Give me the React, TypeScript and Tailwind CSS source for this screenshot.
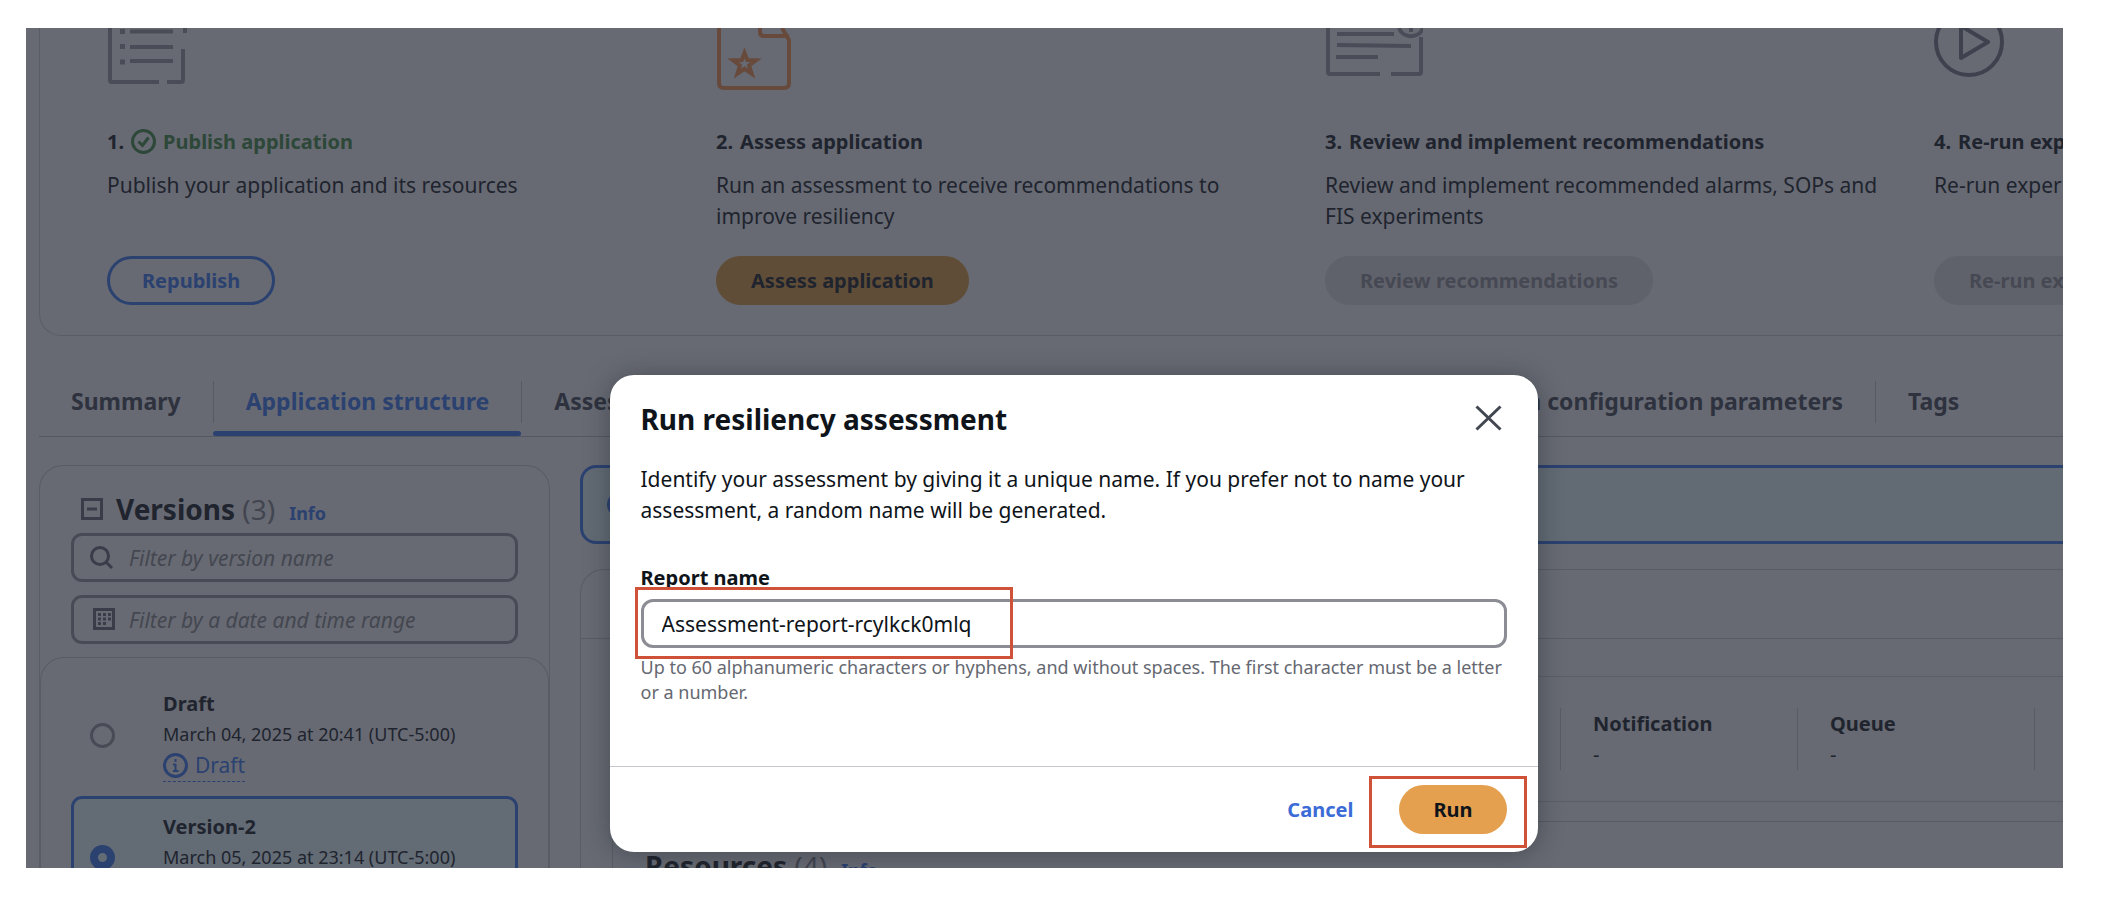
import { useState } from 'react'
import type { ReactNode } from 'react'

const steps = [
  {
    title: 'Publish application',
    done: true,
    text: 'Publish your application and its resources',
    action: 'Republish',
    look: 'border-[3px] border-[#2b4170] text-[#2b4170]',
    icon: <ListIcon />,
  },
  {
    title: 'Assess application',
    text: 'Run an assessment to receive recommendations to improve resiliency',
    action: 'Assess application',
    look: 'border-[3px] border-[#604d37] bg-[#604d37] text-[#20242e]',
    icon: <ReportIcon />,
  },
  {
    title: 'Review and implement recommendations',
    text: 'Review and implement recommended alarms, SOPs and FIS experiments',
    action: 'Review recommendations',
    disabled: true,
    look: 'border-[3px] border-[#60626b] bg-[#60626b] text-[#464953]',
    icon: <AlarmIcon />,
  },
  {
    title: 'Re-run experiments',
    text: 'Re-run experiments to validate your resiliency posture',
    action: 'Re-run experiments',
    disabled: true,
    look: 'border-[3px] border-[#60626b] bg-[#60626b] text-[#464953]',
    icon: <PlayIcon />,
  },
]

const versions = [
  { name: 'Draft', date: 'March 04, 2025 at 20:41 (UTC-5:00)', draft: true },
  { name: 'Version-2', date: 'March 05, 2025 at 23:14 (UTC-5:00)', draft: false },
]

const counts = ['Compute', 'Database', 'Storage', 'Network', 'Notification', 'Queue', 'Other']

function ListIcon() {
  return (
    <svg width="80" height="62" viewBox="0 0 80 62" fill="none" stroke="#4a4d57" strokeWidth="4">
      <path d="M3 0v52q0 2 2 2h47M60 54h14q2 0 2-2V21M78 0v5" />
      <path d="M23 3.500h43M23 19h43M23 33h43" />
      <path d="M13 3.500h5M13 18.500h5M13 34h5" strokeWidth="5" />
    </svg>
  )
}

function ReportIcon() {
  return (
    <svg width="80" height="62" viewBox="0 0 80 62" fill="none" stroke="#674a3c" strokeWidth="4">
      <path d="M3 0v55q0 5 5 5h60q5 0 5-5V12L66 0M44 0v4q0 4 4 4h25" />
      <path d="M28.500 25l2.800 7.100 8.600.2-6.800 5.200 2.500 8.200-7.100-4.900-7.100 4.900 2.500-8.200-6.800-5.200 8.600-.2z" />
    </svg>
  )
}

function AlarmIcon() {
  return (
    <svg width="98" height="62" viewBox="0 0 98 62" fill="none" stroke="#4a4d57" strokeWidth="4">
      <path d="M3 0v44q0 2 2 2h50M66 46h28q2 0 2-2V9" />
      <path d="M12 6h57M12 17l74 1M11 29h42" />
      <path d="M74 0c4 11 20 11 24 0M86 0v4" />
    </svg>
  )
}

function PlayIcon() {
  return (
    <svg width="80" height="62" viewBox="0 0 80 62" fill="none" stroke="#3f424e" strokeWidth="4">
      <circle cx="35" cy="14" r="33" />
      <path d="M27 -2v32l27-16z" strokeLinejoin="round" />
    </svg>
  )
}

function CheckIcon() {
  return (
    <svg width="25" height="25" viewBox="0 0 25 25" fill="none" stroke="#2d4738" strokeWidth="3">
      <circle cx="12.500" cy="12.500" r="11" />
      <path d="M7.500 12.500l4 4 6-8" />
    </svg>
  )
}

function InfoIcon() {
  return (
    <svg width="25" height="25" viewBox="0 0 25 25" fill="none" stroke="#2b4170" strokeWidth="3">
      <circle cx="12.500" cy="12.500" r="11" />
      <path d="M12.500 11v7M12.500 6v3M10 11.500h2.500M10 18h5.500" strokeWidth="2" />
    </svg>
  )
}

function Tab({ active, first, children }: { active?: boolean; first?: boolean; children: ReactNode }) {
  return (
    <div className="relative flex h-[66px] items-center pb-[3px]">
      {!first && <span className="h-[42px] w-px bg-[#575a64]" />}
      <a href="#tab" className={`px-8 text-[23px] font-bold whitespace-nowrap ${active ? 'text-[#2b4170]' : 'text-[#2e323e]'}`}>
        {children}
      </a>
      {active && <span className="absolute inset-x-0 bottom-0 h-[5px] rounded-[3px] bg-[#2b4170]" />}
    </div>
  )
}

function Steps() {
  return (
    <section className="ml-[13px] flex w-max rounded-b-[22px] border border-t-0 border-[#5a5d67] pb-[30px] pl-[67px]">
      {steps.map((s, i) => (
        <div key={s.title} className="w-[609px] shrink-0 pr-[50px]">
          {s.icon}
          <h3 className="mt-9 flex items-center gap-[7px] font-bold whitespace-nowrap">
            {i + 1}.
            {s.done ? (
              <span className="flex items-center gap-[7px] text-[#2d4738]">
                <CheckIcon />
                {s.title}
              </span>
            ) : (
              <span>{s.title}</span>
            )}
          </h3>
          <p className="mt-[13px] min-h-[62px] text-[21px]">{s.text}</p>
          <button disabled={s.disabled} className={`mt-6 h-[49px] rounded-full px-8 font-bold ${s.look}`}>
            {s.action}
          </button>
        </div>
      ))}
    </section>
  )
}

function Versions() {
  const [selected, setSelected] = useState('Version-2')
  const box =
    'h-[49px] w-full rounded-[11px] border-[3px] border-[#484b55] bg-transparent pr-4 pl-[55px] text-[21px] text-[#20242e] placeholder:text-[#444750] placeholder:italic'

  return (
    <section className="w-[511px] shrink-0 rounded-t-[24px] border border-b-0 border-[#595c66]">
      <div className="px-[31px] pt-[25px]">
        <div className="mb-[6px] flex h-9 items-baseline pl-[10px]">
          <svg width="22" height="22" viewBox="0 0 22 22" fill="none" stroke="#3a3d49" strokeWidth="3">
            <path d="M1.500 1.500h19v19h-19zM6 11h10" />
          </svg>
          <h2 className="ml-[13px] text-[28px] leading-9 font-bold">
            Versions <span className="font-normal text-[#42454f]">(3)</span>
          </h2>
          <a href="#info" className="ml-[14px] text-[18px] font-bold text-[#2b4170]">
            Info
          </a>
        </div>
        <div className="relative mb-[13px]">
          <svg className="absolute top-[13px] left-[19px]" width="24" height="24" viewBox="0 0 24 24" fill="none" stroke="#3a3d49" strokeWidth="3">
            <circle cx="10" cy="10" r="8.500" />
            <path d="M16 16l6 6" />
          </svg>
          <input aria-label="Filter by version name" placeholder="Filter by version name" className={box} />
        </div>
        <div className="relative mb-[13px]">
          <svg className="absolute top-[13px] left-[22px]" width="22" height="22" viewBox="0 0 22 22" fill="none" stroke="#3a3d49">
            <path d="M1.500 1.500h19v19h-19z" strokeWidth="3" />
            <path d="M5 6.500h13M5 11h13M5 15.500h8" strokeWidth="3" strokeDasharray="3 2" />
          </svg>
          <input aria-label="Filter by a date and time range" placeholder="Filter by a date and time range" className={box} />
        </div>
      </div>
      <div className="flex flex-col gap-[11px] rounded-t-[24px] border border-b-0 border-[#595c66] px-[30px] pt-[15px]">
        {versions.map((v) => (
          <label
            key={v.name}
            className={`flex min-h-[110px] items-center gap-[48px] rounded-[11px] border-[3px] px-[16px] pt-3 ${
              selected === v.name ? 'border-[#2b4170] bg-[#636b75]' : 'border-transparent'
            }`}
          >
            <input
              type="radio"
              name="version"
              checked={selected === v.name}
              onChange={() => setSelected(v.name)}
              className="size-[25px] appearance-none rounded-full border-[3px] border-[#484b55] checked:border-[8px] checked:border-[#2b4170]"
            />
            <span className="flex flex-col self-start">
              <span className="font-bold">{v.name}</span>
              <span className="text-[18px]">{v.date}</span>
              {v.draft && (
                <span className="flex w-max items-center gap-[7px] border-b border-dashed border-[#2b4170] text-[21px] text-[#2b4170]">
                  <InfoIcon />
                  Draft
                </span>
              )}
            </span>
          </label>
        ))}
      </div>
    </section>
  )
}

function Structure() {
  return (
    <div className="w-[1700px] shrink-0">
      <div className="mb-[25px] flex h-[79px] items-center rounded-[16px] border-[3px] border-[#2b4170] bg-[#626b74] pl-6">
        <InfoIcon />
      </div>
      <section className="rounded-t-[24px] border border-b-0 border-[#595c66]">
        <div className="h-[69px] border-b border-[#595c66]" />
        <div className="px-[31px] pt-[37px]">
          <div className="flex rounded-[22px] border border-[#5b5e68] py-[31px]">
            {counts.map((c) => (
              <div key={c} className="h-[62px] w-[237px] shrink-0 border-r border-[#595c66] pl-8">
                <div className="font-bold">{c}</div>
                <div>-</div>
              </div>
            ))}
          </div>
          <div className="mt-[19px] flex items-baseline rounded-t-[22px] border border-b-0 border-[#595c66] pt-[26px] pl-8">
            <h2 className="text-[28px] leading-9 font-bold">
              Resources <span className="font-normal text-[#42454f]">(4)</span>
            </h2>
            <a href="#info" className="ml-[14px] text-[18px] font-bold text-[#2b4170]">
              Info
            </a>
          </div>
        </div>
      </section>
    </div>
  )
}

function RunDialog() {
  const [name, setName] = useState('Assessment-report-rcylkck0mlq')

  return (
    <div className="absolute inset-0 flex items-start justify-center pt-[347px] pl-[58px]">
      <div role="dialog" aria-label="Run resiliency assessment" className="w-[928px] rounded-[24px] bg-white text-[#0f141a] shadow-[0_2px_26px_rgba(15,20,26,0.35)]">
        <div className="flex items-start justify-between px-[31px] pt-[25px]">
          <h2 className="text-[28px] leading-[38px] font-bold">Run resiliency assessment</h2>
          <button aria-label="Close" className="mt-[5px] mr-[5px]">
            <svg width="27" height="26" viewBox="0 0 27 26" fill="none" stroke="#424650" strokeWidth="3">
              <path d="M1.500 1.500l24 23M25.500 1.500l-24 23" />
            </svg>
          </button>
        </div>
        <div className="px-[31px] pt-[26px] pb-[61px]">
          <p className="text-[21px]">
            Identify your assessment by giving it a unique name. If you prefer not to name your assessment, a random name will be
            generated.
          </p>
          <label htmlFor="report" className="mt-9 mb-[6px] block font-bold">
            Report name
          </label>
          <div className="relative">
            <input
              id="report"
              value={name}
              onChange={(e) => setName(e.target.value)}
              className="h-[49px] w-full rounded-[12px] border-[3px] border-[#8c8c94] px-[18px] text-[21px]"
            />
            <span className="pointer-events-none absolute -top-[12px] -left-[6px] h-[72px] w-[378px] border-[3px] border-[#cf5138]" />
          </div>
          <p className="mt-[7px] text-[18px] leading-[25px] text-[#656871]">
            Up to 60 alphanumeric characters or hyphens, and without spaces. The first character must be a letter or a number.
          </p>
        </div>
        <div className="flex items-center justify-end gap-[46px] border-t border-[#c6c6cd] px-[31px] pt-[18px] pb-[18px]">
          <button className="font-bold text-[#3b6bd6]">Cancel</button>
          <div className="relative">
            <button className="h-[49px] rounded-full bg-[#e5a04f] px-[34px] font-bold">Run</button>
            <span className="pointer-events-none absolute -top-[9px] -right-[20px] -bottom-[14px] -left-[30px] border-[3px] border-[#cf5138]" />
          </div>
        </div>
      </div>
    </div>
  )
}

export default function App() {
  return (
    <div className="h-screen bg-white pt-7 pr-[55px] pb-[50px] pl-[26px] font-['Noto_Sans',sans-serif] text-[20px] leading-[31px]">
      <main className="relative h-full overflow-hidden bg-[#676a73] text-[#20242e]">
        <Steps />
        <nav className="mt-[34px] ml-[13px] flex border-b border-[#555862]">
          <Tab first>Summary</Tab>
          <Tab active>Application structure</Tab>
          <div className="flex-1">
            <Tab>Assessments</Tab>
          </div>
          <Tab first>Application configuration parameters</Tab>
          <div className="w-[188px]">
            <Tab>Tags</Tab>
          </div>
        </nav>
        <div className="mt-7 ml-[13px] flex gap-[30px]">
          <Versions />
          <Structure />
        </div>
        <RunDialog />
      </main>
    </div>
  )
}
